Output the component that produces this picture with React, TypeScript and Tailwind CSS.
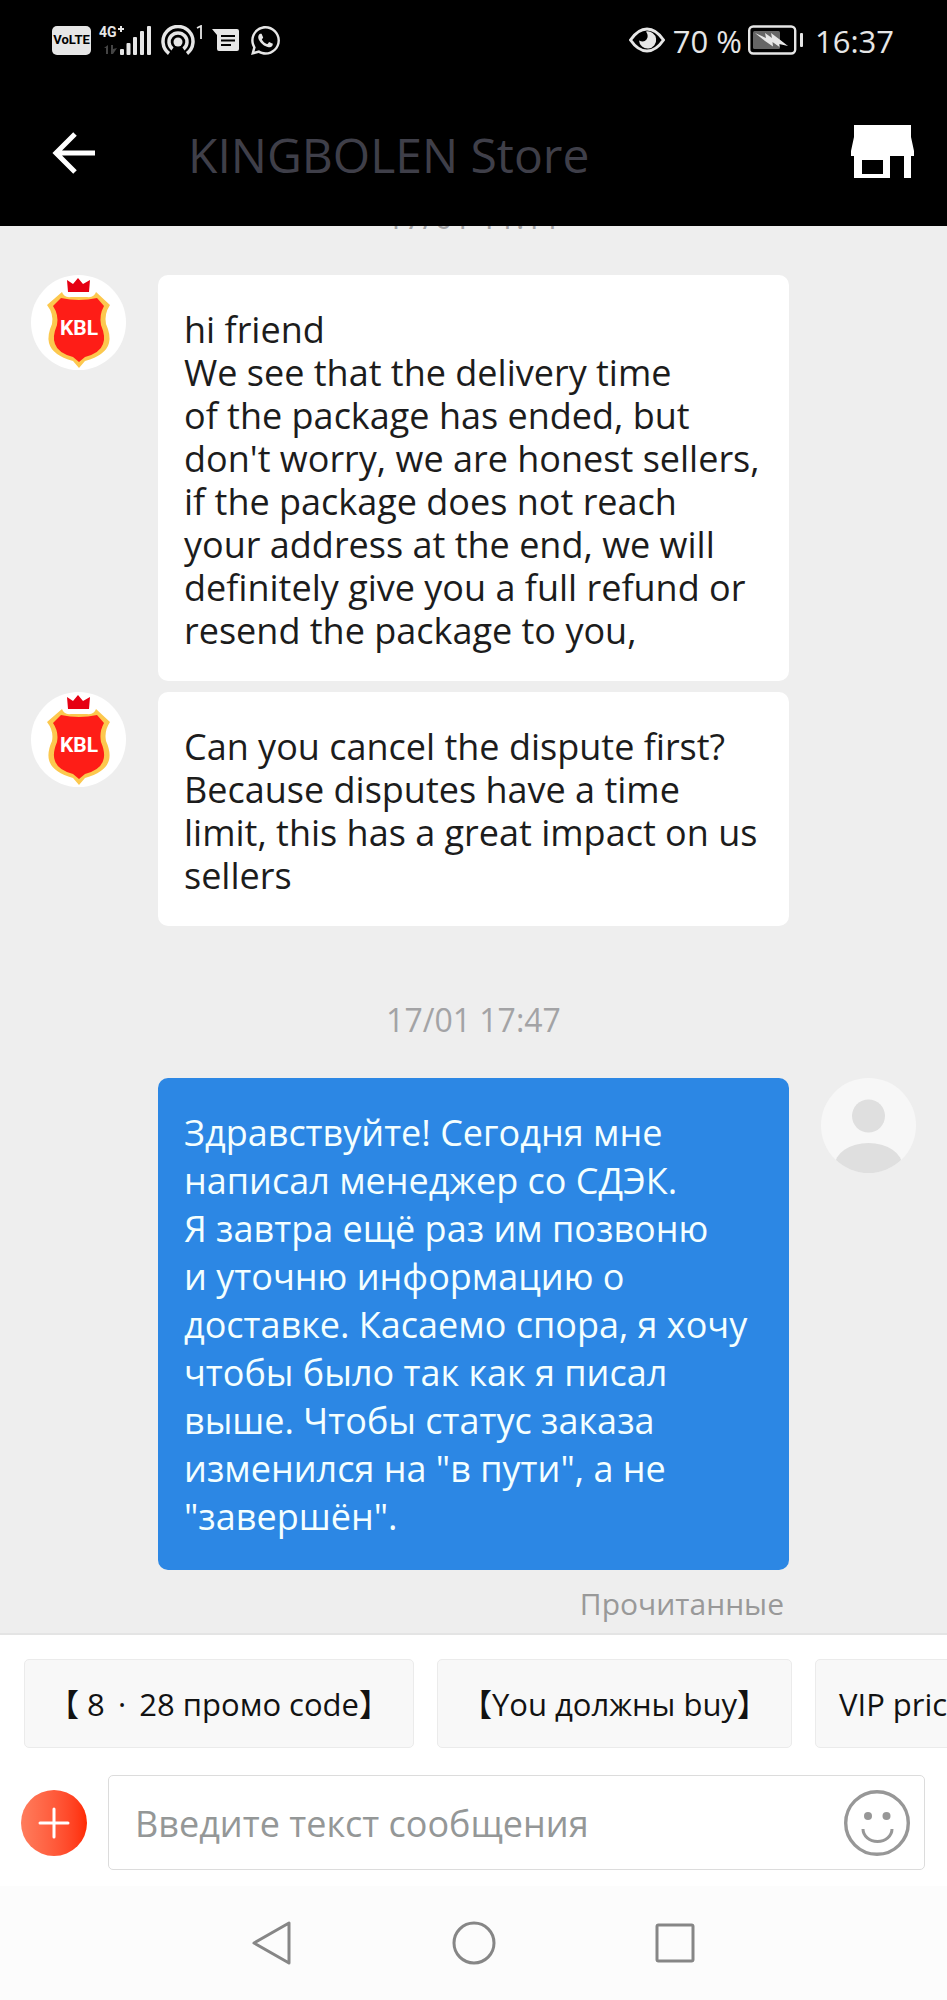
import React from "react";
import { FaWhatsapp } from "react-icons/fa";

type Message = {
    id: number;
    author: "store" | "me";
    text: string;
};

const STORE_MESSAGES: Message[] = [
    {
        id: 1,
        author: "store",
        text: "hi friend\nWe see that the delivery time\nof the package has ended, but\ndon't worry, we are honest sellers,\nif the package does not reach\nyour address at the end, we will\ndefinitely give you a full refund or\nresend the package to you,",
    },
    {
        id: 2,
        author: "store",
        text: "Can you cancel the dispute first?\nBecause disputes have a time\nlimit, this has a great impact on us\nsellers",
    },
];

const MY_MESSAGES: Message[] = [
    {
        id: 3,
        author: "me",
        text: "Здравствуйте! Сегодня мне\nнаписал менеджер со СДЭК.\nЯ завтра ещё раз им позвоню\nи уточню информацию о\nдоставке. Касаемо спора, я хочу\nчтобы было так как я писал\nвыше. Чтобы статус заказа\nизменился на \"в пути\", а не\n\"завершён\".",
    },
];

const QUICK_REPLIES = ["【 8 \u2009·\u2009 28 промо code】", "【You должны buy】", "VIP price"];

const StatusBar: React.FC = () => (
    <div className="flex h-[80px] items-center justify-between pr-[53px] pl-[52px] text-[#e6e6e6]">
        <div className="flex items-center">
            <span className="flex h-[29px] w-[39px] items-center justify-center rounded-[5px] bg-[#e6e6e6] font-['Roboto',sans-serif] text-[13px] font-bold text-black">
                VoLTE
            </span>
            <svg className="ml-[8px] h-[30px] w-[54px] overflow-visible" viewBox="0 0 54 30" fill="currentColor" aria-label="Signal">
                <text x="0" y="12" fontFamily="Roboto, sans-serif" fontSize="14" fontWeight="700">4G</text>
                <path d="M19 3h2V1h2v2h2v2h-2v2h-2V5h-2z" />
                <path d="M5 23l4-3v9H7v-6zM12 20h2v4l4-1-4 6h-2z" fill="#444" />
                <rect x="21" y="24" width="4" height="6" rx="1" />
                <rect x="27.5" y="18" width="4" height="12" rx="1" />
                <rect x="34" y="12" width="4" height="18" rx="1" />
                <rect x="41" y="6" width="4" height="24" rx="1" />
                <rect x="48" y="1" width="4" height="29" rx="1" />
            </svg>
            <svg className="ml-[8px] h-[30px] w-[43px]" viewBox="0 0 43 30" fill="none" stroke="currentColor" strokeWidth="3.5" aria-label="Hotspot">
                <path d="M8 28.500A15 15 0 1 1 26 28.500" />
                <path d="M11.500 24A9 9 0 1 1 22.500 24" />
                <circle cx="17" cy="17" r="4.5" fill="currentColor" stroke="none" />
                <path d="M36 3l4-2v13" strokeWidth="1.8" />
            </svg>
            <svg className="ml-[8px] h-[24px] w-[28px]" viewBox="0 0 28 24" aria-label="Messages">
                <path d="M0 1h25q2 0 2 2v18q0 2-2 2H7q-2 0-2-2V7z" fill="currentColor" />
                <path d="M9 8h14M9 12.500h14M9 17h10" stroke="#000" strokeWidth="1.8" />
            </svg>
            <FaWhatsapp className="ml-[9px] size-[33px]" aria-label="WhatsApp" />
        </div>
        <div className="flex items-center text-[31px] leading-[40px]">
            <svg className="h-[26px] w-[36px]" viewBox="0 0 36 26" aria-label="Eye comfort">
                <path d="M1.500 13Q9 2 18 2t16.500 11Q27 24 18 24T1.500 13z" fill="none" stroke="currentColor" strokeWidth="3" />
                <path d="M17 4.500a8.600 8.600 0 1 1-7 9q5 2.500 7.500-1t-.5-8z" fill="currentColor" />
            </svg>
            <span className="ml-[8px] pt-[2px]">70 %</span>
            <svg className="ml-[6px] h-[30px] w-[56px]" viewBox="0 0 56 30" aria-label="Battery">
                <rect x="1.2" y="1.5" width="46" height="27" rx="4" fill="none" stroke="currentColor" strokeWidth="2.4" />
                <rect x="5" y="6" width="27" height="18" rx="1.5" fill="#666" />
                <path d="M7 8l11 5-1-5 7 5-1-5 8 6 9 7-9-2 .5 3-7-5 .5 4.500-8-5.500z" fill="currentColor" />
                <rect x="52" y="8" width="3" height="14" rx="1" fill="currentColor" />
            </svg>
            <span className="ml-[11px] pt-[2px]">16:37</span>
        </div>
    </div>
);

const Header: React.FC = () => (
    <header className="flex h-[146px] items-start bg-black pr-[33px] pl-[52px] pt-[44px]">
        <button type="button" aria-label="Back" className="mt-[8px]">
            <svg className="h-[42px] w-[44px]" viewBox="0 0 44 42" fill="none" stroke="#fff" strokeWidth="5">
                <path d="M43 21H4M23 2L4 21l19 19" />
            </svg>
        </button>
        <h1 className="ml-[92px] flex-1 text-[48px] leading-[62px] text-[#3f3f49]">KINGBOLEN Store</h1>
        <button type="button" aria-label="Store page">
            <svg className="h-[54px] w-[63px]" viewBox="0 0 63 54">
                <path d="M3 1h57v12l3 14v5h-3v22h-7V32H39v22H3V32H0v-5l3-14zM11 36v14h21V36z" fill="#fff" fillRule="evenodd" />
            </svg>
        </button>
    </header>
);

const StoreAvatar: React.FC = () => (
    <svg className="size-[95px] shrink-0 rounded-full bg-white" viewBox="0 0 95 95" aria-label="KINGBOLEN">
        <path d="M36 5l6 4 5-6 5 6 7-4-1 12H37z" fill="#e60012" />
        <path d="M31 17Q33 23 40 22H56Q63 23 65 17L79 30Q73 39 75 49Q80 60 78 68Q75 80 54 86L48 93L42 86Q21 80 18 68Q16 60 21 49Q23 39 16 30Z" fill="#fcc84e" />
        <path d="M30 23Q48 27 66 23L73 31Q68 40 70 50Q75 62 72 69Q69 78 54 82L48 87L42 82Q27 78 24 69Q21 62 26 50Q28 40 22 31Z" fill="#fe1d17" />
        <text x="48" y="60" textAnchor="middle" fill="#fff" fontFamily="Roboto, sans-serif" fontSize="21" fontWeight="700">KBL</text>
    </svg>
);

const UserAvatar: React.FC = () => (
    <svg className="size-[95px] shrink-0 rounded-full bg-[#f7f7f7]" viewBox="0 0 95 95" aria-label="Me">
        <circle cx="47.5" cy="38" r="16.5" fill="#dfdfdf" />
        <ellipse cx="47.5" cy="88" rx="34" ry="23" fill="#dfdfdf" />
    </svg>
);

const MessageRow: React.FC<{ message: Message }> = ({ message }) => {
    const mine = message.author === "me";
    return (
        <div className="flex items-start gap-[32px] px-[31px]">
            {mine ? <div className="w-[95px] shrink-0" /> : <StoreAvatar />}
            <p
                className={
                    mine
                        ? "flex-1 rounded-[10px] bg-[#2c87e4] px-[26px] pt-[31px] pb-[29px] text-[36px] leading-[48px] whitespace-pre text-[#f4ffff]"
                        : "flex-1 rounded-[10px] bg-white px-[26px] pt-[33px] pb-[29px] text-[36px] leading-[43px] whitespace-pre text-[#1c1c1c]"
                }
            >
                {message.text}
            </p>
            {mine ? <UserAvatar /> : <div className="w-[95px] shrink-0" />}
        </div>
    );
};

const Composer: React.FC = () => (
    <form className="flex items-center bg-white pt-[27px] pr-[22px] pb-[16px] pl-[21px]" onSubmit={(e) => e.preventDefault()}>
        <button
            type="button"
            aria-label="Add attachment"
            className="flex size-[66px] shrink-0 items-center justify-center rounded-full bg-linear-to-r from-[#ff7c5c] to-[#ff2a00]"
        >
            <svg className="size-[32px]" viewBox="0 0 32 32" stroke="#fff" strokeWidth="3" strokeLinecap="round">
                <path d="M16 2v28M2 16h28" />
            </svg>
        </button>
        <div className="ml-[21px] flex h-[95px] flex-1 items-center rounded-[5px] border border-[#dcdcdc] pr-[14px] pl-[26px]">
            <input
                type="text"
                aria-label="Введите текст сообщения"
                placeholder="Введите текст сообщения"
                className="h-full min-w-0 flex-1 bg-transparent pt-[2px] text-[36px] outline-none placeholder:text-[#949797]"
            />
            <button type="button" aria-label="Emoji">
                <svg className="size-[66px]" viewBox="0 0 66 66" fill="none" stroke="#979797">
                    <circle cx="33" cy="33" r="31.3" strokeWidth="3.4" />
                    <path d="M19 39a14.500 12.500 0 0 0 29 0" strokeWidth="3" />
                    <circle cx="24" cy="26" r="4" fill="#979797" stroke="none" />
                    <circle cx="42.5" cy="26" r="4" fill="#979797" stroke="none" />
                </svg>
            </button>
        </div>
    </form>
);

const NavBar: React.FC = () => (
    <nav className="flex h-[114px] items-center justify-center gap-[157px] bg-[#fcfcfc]">
        <button type="button" aria-label="Back">
            <svg className="size-[44px]" viewBox="0 0 44 44" fill="none" stroke="#868686" strokeWidth="3" strokeLinejoin="round">
                <path d="M38 2v40L3 22z" />
            </svg>
        </button>
        <button type="button" aria-label="Home">
            <svg className="size-[44px]" viewBox="0 0 44 44" fill="none" stroke="#868686" strokeWidth="3">
                <circle cx="22" cy="22" r="20" />
            </svg>
        </button>
        <button type="button" aria-label="Recent apps">
            <svg className="size-[44px]" viewBox="0 0 44 44" fill="none" stroke="#868686" strokeWidth="3">
                <rect x="4" y="4" width="36" height="36" rx="1.5" />
            </svg>
        </button>
    </nav>
);

const App: React.FC = () => (
    <div className="flex min-h-screen flex-col bg-[#eee] font-['Open_Sans','Noto_Sans','Noto_Sans_CJK_SC',sans-serif]">
        <div className="bg-black">
            <StatusBar />
            <Header />
        </div>
        <main className="flex-1">
            {/* scrolled under the header, only the feet of the digits stay visible */}
            <div className="flex h-[49px] items-start justify-center overflow-hidden">
                <time className="-mt-[31px] text-[32px] leading-[44px] text-[#a3a3a5]">17/01 11:11</time>
            </div>
            <div className="flex flex-col gap-[11px]">
                {STORE_MESSAGES.map((message) => (
                    <MessageRow key={message.id} message={message} />
                ))}
            </div>
            <time className="mt-[72px] block text-center text-[32px] leading-[44px] text-[#a3a3a5]">17/01 17:47</time>
            <div className="mt-[36px]">
                {MY_MESSAGES.map((message) => (
                    <MessageRow key={message.id} message={message} />
                ))}
            </div>
            <p className="mt-[12px] mb-[7px] pr-[163px] text-right text-[30px] leading-[44px] text-[#999]">Прочитанные</p>
        </main>
        <footer className="border-t-2 border-[#e4e4e4] bg-white">
            <div className="flex gap-[23px] overflow-hidden pt-[24px] pl-[24px]">
                {QUICK_REPLIES.map((reply) => (
                    <button
                        key={reply}
                        type="button"
                        className="h-[89px] shrink-0 rounded-[5px] border border-[#ebebeb] bg-[#f8f8f8] px-[23px] pt-[2px] text-[31px] whitespace-pre text-[#121212]"
                    >
                        {reply}
                    </button>
                ))}
            </div>
            <Composer />
            <NavBar />
        </footer>
    </div>
);

export default App;
